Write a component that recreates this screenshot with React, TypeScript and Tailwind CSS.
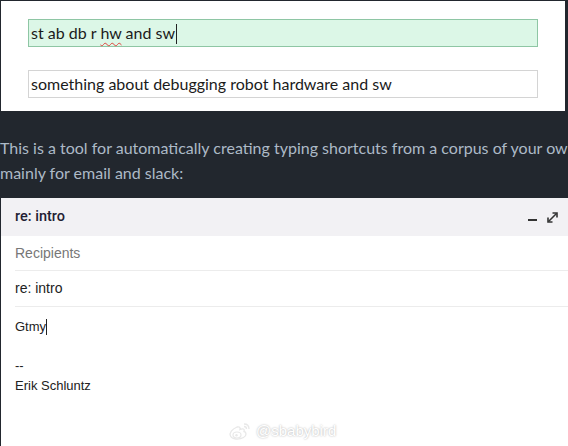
import React from "react";

export default function App() {
  return (
    <div className="relative w-[568px] h-[446px] overflow-hidden bg-[#22272e]">
      {/* top white panel */}
      <div className="ml-px mt-px w-[564px] h-[110px] bg-white pt-[18px] pl-[27px]" style={{ fontFamily: "Lato, 'Open Sans', sans-serif" }}>
        <div className="w-[510px] h-[28px] border border-[#8ec6a4] bg-[#dcf7e7] pl-[2px] text-[16px] leading-[26px] text-[#1b1b1b] whitespace-pre">
          st ab db r <span className="underline decoration-wavy decoration-[#e0443e] decoration-1 underline-offset-[3px]">hw</span> and sw<span className="inline-block align-middle w-px h-[20px] bg-[#222] ml-px -mt-[2px]" />
        </div>
        <div className="mt-[23px] w-[510px] h-[28px] border border-[#d4d4d4] bg-white pl-[2px] text-[16px] leading-[26px] text-[#1b1b1b] whitespace-pre">
          something about debugging robot hardware and sw
        </div>
      </div>

      {/* dark band */}
      <div className="h-[87px] pt-[24px] text-[16px] leading-[25px] text-[#adbac7] whitespace-nowrap overflow-hidden" style={{ fontFamily: "Lato, sans-serif" }}>
        <div>This is a tool for automatically creating typing shortcuts from a corpus of your ow</div>
        <div>mainly for email and slack:</div>
      </div>

      {/* email compose */}
      <div className="ml-px h-[248px] bg-white" style={{ fontFamily: "'Liberation Sans', Arial, sans-serif" }}>
        <div className="h-[38px] bg-[#f2f1f4] flex items-center pl-[14px] pr-[10px]">
          <span className="text-[14.5px] font-medium text-[#1f2033]" style={{ fontFamily: "Roboto, sans-serif" }}>re: intro</span>
          <div className="ml-auto flex items-center gap-[10px]">
            <svg width="9" height="10" viewBox="0 0 9 10">
              <rect x="0" y="7" width="9" height="2" fill="#333" />
            </svg>
            <svg width="11" height="11" viewBox="0 0 11 11" fill="none">
              <path d="M1.5 9.5 L9.5 1.5" stroke="#333" strokeWidth="1.6" />
              <path d="M5.5 1 H10 V5.5" stroke="#333" strokeWidth="1.6" />
              <path d="M1 5.5 V10 H5.5" stroke="#333" strokeWidth="1.6" />
            </svg>
          </div>
        </div>
        <div className="ml-[14px]">
          <div className="h-[35px] flex items-center border-b border-[#ececec] text-[14px] text-[#777]">Recipients</div>
          <div className="h-[36px] flex items-center border-b border-[#ececec] text-[14px] text-[#222]">re: intro</div>
          <div className="pt-[10px] text-[13px] leading-[19.5px] text-[#222]">
            <div className="flex items-center">Gtmy<span className="inline-block w-px h-[16px] bg-[#222]" /></div>
            <div className="h-[19.5px]" />
            <div>--</div>
            <div>Erik Schluntz</div>
          </div>
        </div>
      </div>

      {/* watermark */}
      <div className="absolute left-[228px] top-[420px] flex items-center gap-[4px]">
        <svg width="24" height="20" viewBox="0 0 24 20" fill="none">
          <path d="M9 6 C4 8 1 12 2.5 15 C4 18.5 11 19 15.5 16.5 C19 14.5 18.5 11 16 10.5 C17 8 15 7 12 8.5 C12.5 6.5 11.5 5.5 9 6 Z" stroke="#e8e8e8" strokeWidth="1.3" />
          <ellipse cx="9" cy="14" rx="4" ry="3" stroke="#e8e8e8" strokeWidth="1.2" />
          <circle cx="8.5" cy="14.3" r="1.2" fill="#e8e8e8" />
          <path d="M16 3 C19 3 21 5 21 8" stroke="#e8e8e8" strokeWidth="1.3" />
          <path d="M16 5.5 C17.5 5.5 18.5 6.5 18.5 8" stroke="#e8e8e8" strokeWidth="1.3" />
        </svg>
        <span className="text-[15px] text-white" style={{ fontFamily: "'Liberation Sans', Arial, sans-serif", textShadow: "0 0 2px rgba(0,0,0,0.35)" }}>@sbabybird</span>
      </div>
    </div>
  );
}
